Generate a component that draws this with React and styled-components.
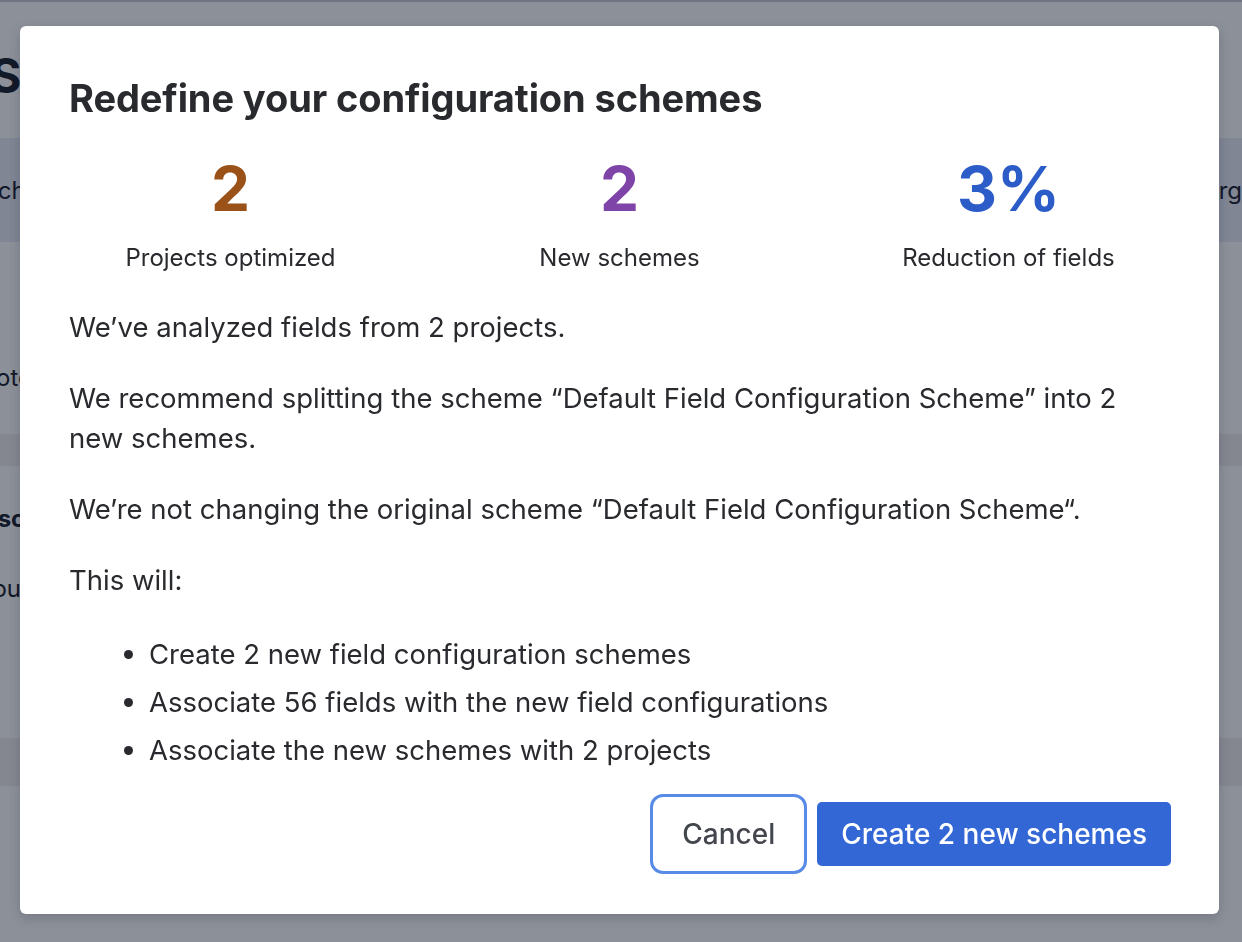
import styled, { createGlobalStyle } from 'styled-components';

const GlobalStyle = createGlobalStyle`
    html, body {
        margin: 0;
        padding: 0;
        height: 100%;
        overflow: hidden;
    }
    body {
        font-family: Inter, "Noto Sans", "Liberation Sans", sans-serif;
        color: #292a2e;
        background: #ffffff;
    }
    * {
        box-sizing: border-box;
    }
`;

const stats = [
    { value: '2', label: 'Projects optimized', color: '#9a5219' },
    { value: '2', label: 'New schemes', color: '#7f44a8' },
    { value: '3%', label: 'Reduction of fields', color: '#2b5cc8' },
];

const steps = [
    'Create 2 new field configuration schemes',
    'Associate 56 fields with the new field configurations',
    'Associate the new schemes with 2 projects',
];

const App = () => {
    return (
        <>
            <GlobalStyle />
            <Page>
                <TopLine />
                <PageInner>
                    <PageTitle>Schemes</PageTitle>
                    <HeaderBand>
                        <BandText>Search</BandText>
                        <BandText>Merge</BandText>
                    </HeaderBand>
                    <RowText top='121px'>Note</RowText>
                    <GreyBand height='32px' top='41px' />
                    <RowText top='38px' indent='-12px' bold>Desc</RowText>
                    <RowText top='40px'>You</RowText>
                    <GreyBand height='48px' top='134px' />
                </PageInner>
            </Page>
            <Blanket>
                <Dialog role='dialog'>
                    <Title>Redefine your configuration schemes</Title>
                    <StatRow>
                        {stats.map((s) => (
                            <Stat key={s.label}>
                                <StatValue color={s.color}>{s.value}</StatValue>
                                <StatLabel>{s.label}</StatLabel>
                            </Stat>
                        ))}
                    </StatRow>
                    <Body>
                        <Paragraph>We’ve analyzed fields from 2 projects.</Paragraph>
                        <Paragraph>
                            We recommend splitting the scheme “Default Field Configuration Scheme” into 2 new schemes.
                        </Paragraph>
                        <Paragraph>
                            We’re not changing the original scheme “Default Field Configuration Scheme“.
                        </Paragraph>
                        <Paragraph>This will:</Paragraph>
                        <List>
                            {steps.map((step) => (
                                <Item key={step}>{step}</Item>
                            ))}
                        </List>
                    </Body>
                    <Footer>
                        <Button subtle>Cancel</Button>
                        <Button>Create 2 new schemes</Button>
                    </Footer>
                </Dialog>
            </Blanket>
        </>
    );
};

const Page = styled.div`
    height: 100vh;
    overflow: hidden;
    background: #ffffff;
`;

const TopLine = styled.div`
    height: 2px;
    background: #cdced4;
`;

const PageInner = styled.div`
    margin-left: -22px;
    margin-right: -60px;
    display: flex;
    flex-direction: column;
`;

const PageTitle = styled.h1`
    margin: 46px 0 0 12px;
    font-size: 48px;
    line-height: 56px;
    font-weight: 700;
    color: #1f2430;
`;

const HeaderBand = styled.div`
    margin-top: 34px;
    height: 104px;
    background: #e9ecf8;
    display: flex;
    align-items: center;
    justify-content: space-between;
    padding: 0 46px 0 0;
`;

const BandText = styled.span`
    font-size: 24px;
    color: #1f2430;
    &:first-child {
        margin-left: -32px;
    }
`;

const RowText = styled.div`
    margin-top: ${(p) => p.top};
    margin-left: ${(p) => p.indent || '0'};
    font-size: 24px;
    line-height: 30px;
    font-weight: ${(p) => (p.bold ? 700 : 400)};
    color: #1f2430;
`;

const GreyBand = styled.div`
    margin-top: ${(p) => p.top};
    height: ${(p) => p.height};
    background: #f1eff0;
`;

const Blanket = styled.div`
    position: fixed;
    inset: 0;
    background: rgba(5, 12, 31, 0.46);
    padding: 26px 23px 0 20px;
`;

const Dialog = styled.section`
    width: 1199px;
    background: #ffffff;
    border-radius: 6px;
    box-shadow: 0 4px 12px rgba(5, 12, 31, 0.18);
    padding: 46px 48px 48px 49px;
    display: flex;
    flex-direction: column;
`;

const Title = styled.h2`
    margin: 0;
    font-size: 38px;
    line-height: 52px;
    font-weight: 700;
    color: #292a2e;
    letter-spacing: -0.1px;
`;

const StatRow = styled.div`
    display: grid;
    grid-template-columns: repeat(3, 1fr);
    margin: 29px -32px 0 -33px;
`;

const Stat = styled.div`
    display: flex;
    flex-direction: column;
    align-items: center;
`;

const StatValue = styled.div`
    font-size: 62px;
    line-height: 72px;
    font-weight: 700;
    color: ${(p) => p.color};
`;

const StatLabel = styled.div`
    margin-top: 18px;
    font-size: 24px;
    line-height: 30px;
    color: #292a2e;
`;

const Body = styled.div`
    margin-top: 34px;
`;

const Paragraph = styled.p`
    margin: 0 0 31px 0;
    font-size: 27.5px;
    line-height: 40px;
    color: #292a2e;
`;

const List = styled.ul`
    margin: 34px 0 0 0;
    padding-left: 80px;
`;

const Item = styled.li`
    font-size: 27.5px;
    line-height: 40px;
    margin-bottom: 8px;
    color: #292a2e;
`;

const Footer = styled.div`
    margin-top: 24px;
    display: flex;
    justify-content: flex-end;
    gap: 18px;
`;

const Button = styled.button`
    height: 64px;
    padding: 0 24px;
    border: none;
    border-radius: 5px;
    font-family: inherit;
    font-size: 28px;
    font-weight: 500;
    cursor: pointer;
    background: ${(p) => (p.subtle ? '#ffffff' : '#3467d6')};
    color: ${(p) => (p.subtle ? '#44464d' : '#ffffff')};
    outline: ${(p) => (p.subtle ? '3px solid #588ae8' : 'none')};
    outline-offset: 5px;
`;

export default App;
